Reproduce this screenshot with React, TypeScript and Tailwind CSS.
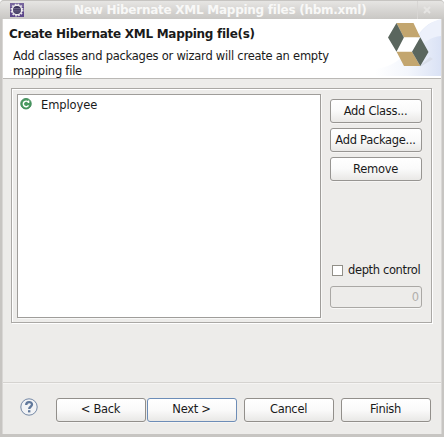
import type { ReactNode } from "react";

function Button({ children, className = "" }: { children: ReactNode; className?: string }) {
  return (
    <button
      className={`flex h-6 shrink-0 items-center justify-center whitespace-nowrap rounded-[3px] border bg-linear-to-b from-white via-[#fafafa] to-[#e9e8e6] pr-px tracking-[-0.3px] shadow-[0_1px_0_#f6f5f4] ${className}`}
    >
      {children}
    </button>
  );
}

function EclipseIcon() {
  return (
    <svg width="14" height="14" viewBox="0 0 14 14" className="shrink-0">
      <rect width="14" height="14" fill="#5d478b" />
      <rect x="0" y="0" width="14" height="4" fill="#77659d" />
      <circle cx="7" cy="7" r="5.8" fill="none" stroke="#e6e3e8" strokeWidth="1.4" strokeDasharray="1.6 1.44" />
      <circle cx="7" cy="7" r="4.7" fill="#39315b" stroke="#f0edf0" strokeWidth="1.5" />
      <path d="M3.5 5.5h7M3.2 7.2h7.6M3.7 9h6.6" stroke="#8d86a3" strokeWidth="0.6" />
    </svg>
  );
}

function HibernateBanner() {
  return (
    <svg width="66" height="58" viewBox="375 19 66 58" className="shrink-0">
      <defs>
        <linearGradient id="sky" x1="0" x2="1">
          <stop offset="0" stopColor="#fff" />
          <stop offset="0.5" stopColor="#f3f6fc" />
          <stop offset="1" stopColor="#dae2f5" />
        </linearGradient>
      </defs>
      <path d="M441 20C428 22 422 28 414 41C403 60 391 67 375 69V76H441Z" fill="url(#sky)" />
      <path d="M441 19V36C431 37 423 42 418 51C415 39 422 24 441 19Z" fill="#edf1fb" />
      <path d="M422 64L430 57L433 59L420 67Z" fill="#d9deea" />
      <path d="M403.7 37.5H420.3L412 52H396.5Z" fill="#fff" />
      <path d="M396.5 23H413.5L420.3 37.3H403.7ZM396.5 51.8H412L420.3 66H404Z" fill="#c3a66f" />
      <path d="M396.5 23L403.9 37.5L396.5 51.8L388 37.5ZM420.3 37.3L428.5 52L420.3 66L412 51.8Z" fill="#5a665e" />
    </svg>
  );
}

function ClassIcon() {
  return (
    <svg width="12" height="12" viewBox="0 0 12 12" className="shrink-0">
      <circle cx="6" cy="5.7" r="5.3" fill="#4b9a62" stroke="#368350" strokeWidth="0.8" />
      <path d="M8.6 2.6V5M8.4 4.3A2.8 2.8 0 1 0 8.5 7.4" fill="none" stroke="#fff" strokeWidth="1.4" />
    </svg>
  );
}

function HelpIcon() {
  return (
    <svg width="18" height="18" viewBox="0 0 18 18" className="shrink-0">
      <circle cx="9" cy="9" r="8.2" fill="#f2f3f5" stroke="#7488a5" strokeWidth="1" />
      <path d="M6.2 6.9C6.2 3.2 12 3.2 12 6.6C12 8.8 9.2 8.7 9.2 11" fill="none" stroke="#60789b" strokeWidth="2.3" />
      <rect x="8" y="12.2" width="2.4" height="2.2" fill="#60789b" />
    </svg>
  );
}

export default function App() {
  return (
    <div className="flex h-[437px] w-[444px] flex-col overflow-hidden rounded-t-[4px] bg-[#c7c5c2] font-['DejaVu_Sans',sans-serif] text-[11.5px] leading-[14px] text-[#1a1a1a]">
      <header className="flex h-[19px] shrink-0 items-center rounded-t-[4px] border-t border-[#c6c4c1] bg-linear-to-b from-[#e6e5e3] to-[#c9c7c4] pl-[10px]">
        <EclipseIcon />
        <h1 className="ml-[50px] w-[292px] whitespace-nowrap text-[12px] font-bold tracking-[-0.26px] text-[#f8f8f7]">
          New Hibernate XML Mapping files (hbm.xml)
        </h1>
        <div className="ml-auto flex h-full w-[27px] items-center border-l border-[#d8d6d4] pl-[5px]">
          <svg width="8" height="8" viewBox="0 0 8 8">
            <path d="M1 1L7 7M7 1L1 7" stroke="#e6e5e3" strokeWidth="2" />
          </svg>
        </div>
      </header>

      <main className="mb-[3px] ml-[2px] mr-[2px] flex flex-1 flex-col border-l border-r border-[#d9d7d5] bg-[#edecea]">
        <section className="flex h-[60px] shrink-0 justify-between border-b border-[#bab8b5] bg-white">
          <div className="pl-[6px] pt-2">
            <h2 className="whitespace-nowrap text-[12px] font-bold tracking-[-0.28px]">
              Create Hibernate XML Mapping file(s)
            </h2>
            <p className="mt-2 whitespace-nowrap pl-1 leading-[15px] tracking-[-0.24px]">
              Add classes and packages or wizard will create an empty
              <br />
              mapping file
            </p>
          </div>
          <HibernateBanner />
        </section>

        <section className="ml-[8px] mt-[9px] flex h-[235px] w-[421px] shrink-0 border border-[#aaa8a5] p-[5px] shadow-[1px_1px_0_#fff,inset_1px_1px_0_#fff]">
          <div className="h-[224px] w-[304px] shrink-0 border border-[#9f9d9a] bg-white pl-[2px] pt-[3px] shadow-[1px_1px_0_#f8f8f7]">
            <div className="flex h-[14px] items-start gap-[9px]">
              <ClassIcon />
              <span className="tracking-[-0.1px]">Employee</span>
            </div>
          </div>
          <div className="ml-[9px] flex w-[92px] flex-col pt-[5px]">
            <div className="flex flex-col gap-[5px]">
              <Button className="border-[#979592] pb-px">Add Class...</Button>
              <Button className="border-[#979592] pb-px">Add Package...</Button>
              <Button className="border-[#979592] pb-px">Remove</Button>
            </div>
            <label className="mt-[82px] flex h-[14px] items-center gap-[5px] whitespace-nowrap pl-[2px] tracking-[-0.36px]">
              <span className="h-[11px] w-[11px] shrink-0 border border-[#918f88] bg-white" />
              depth control
            </label>
            <div className="mt-[9px] flex h-[22px] items-center justify-end rounded-[3px] border border-[#aaa8a5] pb-px pr-[2px] text-[#b1afac] shadow-[0_1px_0_#f8f8f7]">
              0
            </div>
          </div>
        </section>

        <footer className="mt-auto flex h-[52px] shrink-0 items-start border-t border-[#d5d3d0] pl-[17px] pt-[15px] shadow-[inset_0_1px_0_#f5f4f3]">
          <div className="mr-[18px]">
            <HelpIcon />
          </div>
          <Button className="w-[90px] border-[#928f8b] pb-[3px]">&lt; Back</Button>
          <Button className="ml-px w-[90px] border-[#6d8db7] pb-[3px]">Next &gt;</Button>
          <Button className="ml-[7px] w-[90px] border-[#928f8b] pb-[3px]">Cancel</Button>
          <Button className="ml-[7px] w-[90px] border-[#928f8b] pb-[3px]">Finish</Button>
        </footer>
      </main>
    </div>
  );
}
